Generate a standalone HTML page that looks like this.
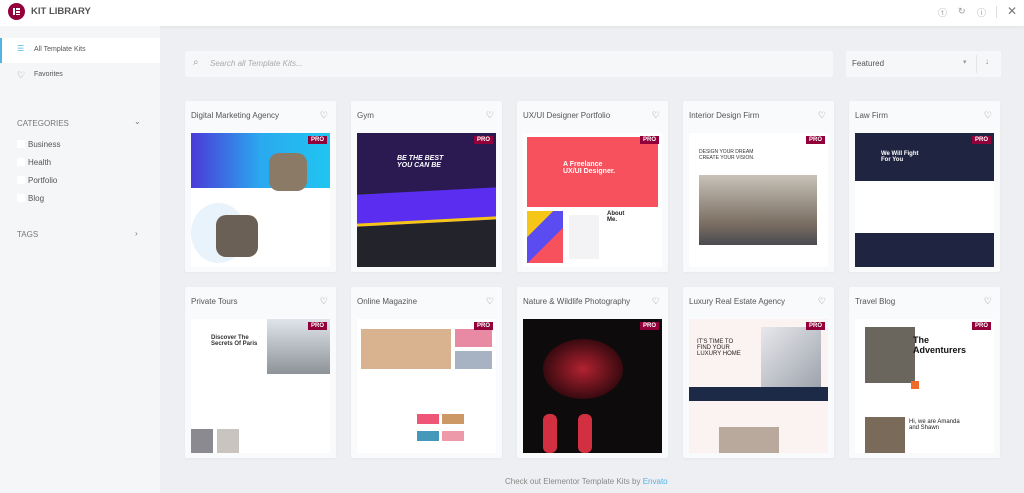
<!DOCTYPE html>
<html><head><meta charset="utf-8"><style>
*{margin:0;padding:0;box-sizing:border-box}
body{width:1024px;height:493px;overflow:hidden;font-family:"Liberation Sans",sans-serif;background:#eeeff2;position:relative;color:#555}
.hdr{position:absolute;left:0;top:0;width:1024px;height:26px;background:#fff;box-shadow:0 1px 4px rgba(0,0,0,.06)}
.logo{position:absolute;left:8px;top:3px;width:17px;height:17px;border-radius:50%;background:#92003b}
.logo i{position:absolute;background:#fff}
.hdr .t{position:absolute;left:31px;top:6px;font-size:9.5px;font-weight:bold;color:#555}
.side{position:absolute;left:0;top:26px;width:160px;height:467px;background:#f5f6f8}
.act{position:absolute;left:0;top:12px;width:160px;height:25px;background:#fff;border-left:2px solid #4fb4e4}
.s{position:absolute;font-size:8px;color:#555}
.cb{position:absolute;left:17px;width:8px;height:8px;background:#fff;border-radius:1px}
.search{position:absolute;left:185px;top:51px;width:648px;height:26px;background:#f6f7f9;border-radius:2px}
.search span{position:absolute;left:25px;top:8px;font-size:8px;font-style:italic;color:#aaa}
.feat{position:absolute;left:846px;top:51px;width:155px;height:26px;background:#f6f7f9}
.card{position:absolute;width:151px;height:171px;background:#f9fafb;border-radius:2px;box-shadow:0 1px 3px rgba(0,0,0,.04)}
.card .n{position:absolute;left:6px;top:10px;font-size:8px;color:#555}
.card .h{position:absolute;right:8px;top:9px;font-size:9px;color:#777}
.im{position:absolute;left:6px;top:32px;width:139px;height:134px;background:#fff;overflow:hidden}
.pro{position:absolute;right:3px;top:3px;background:#92003b;color:#fff;font-size:6px;font-weight:bold;padding:1px 3px}
.im div{position:absolute}
.foot{position:absolute;top:477px;left:505px;font-size:8px;color:#888}
</style></head><body>
<div class="hdr"><div class="logo"><i style="left:5px;top:5px;width:2px;height:7px"></i><i style="left:8px;top:5px;width:4px;height:1.5px"></i><i style="left:8px;top:8px;width:4px;height:1.5px"></i><i style="left:8px;top:10.5px;width:4px;height:1.5px"></i></div><div class="t">KIT LIBRARY</div>
<div class="s" style="left:938px;top:6px;color:#999;font-size:9px">ⓣ</div><div class="s" style="left:958px;top:6px;color:#999;font-size:9px">↻</div><div class="s" style="left:977px;top:6px;color:#999;font-size:9px">ⓘ</div><div style="position:absolute;left:996px;top:6px;width:1px;height:12px;background:#ddd"></div><div class="s" style="left:1007px;top:4px;font-size:12px;color:#777">✕</div></div>
<div class="side">
<div class="act"></div>
<div class="s" style="left:17px;top:18px;color:#4fb4e4">☰</div><div class="s" style="left:34px;top:20px;font-size:7px;color:#555">All Template Kits</div>
<div class="s" style="left:17px;top:44px;color:#888;font-size:9px">♡</div><div class="s" style="left:34px;top:45px;font-size:7px">Favorites</div>
<div class="s" style="left:17px;top:93px;color:#777">CATEGORIES</div><div class="s" style="left:134px;top:91px;color:#777">⌄</div>
<div class="cb" style="top:114px"></div><div class="s" style="left:28px;top:114px">Business</div>
<div class="cb" style="top:132px"></div><div class="s" style="left:28px;top:132px">Health</div>
<div class="cb" style="top:150px"></div><div class="s" style="left:28px;top:150px">Portfolio</div>
<div class="cb" style="top:168px"></div><div class="s" style="left:28px;top:168px">Blog</div>
<div class="s" style="left:17px;top:204px;color:#777">TAGS</div><div class="s" style="left:135px;top:203px;color:#777">›</div>
</div>
<div class="search"><div class="s" style="left:8px;top:6px;color:#999;font-size:10px">⌕</div><span>Search all Template Kits...</span></div>
<div class="feat"><div class="s" style="left:6px;top:8px">Featured</div><div class="s" style="left:117px;top:7px;color:#999;font-size:7px">▾</div><div style="position:absolute;left:130px;top:4px;width:1px;height:18px;background:#e5e5e5"></div><div class="s" style="left:139px;top:6px;color:#888">↓</div></div>

<div class="card" style="left:185px;top:101px"><div class="n">Digital Marketing Agency</div><div class="h">♡</div><div class="im"><div style="left:0;top:0;width:139px;height:55px;background:linear-gradient(90deg,#4a3ad8,#2aa9ef,#20c5f0)"></div><div style="left:78px;top:20px;width:38px;height:38px;border-radius:10px;background:#8a7a66"></div><div style="left:0;top:70px;width:55px;height:60px;border-radius:50%;background:#e8f3fb"></div><div style="left:25px;top:82px;width:42px;height:42px;border-radius:10px;background:#6a6055"></div><div class="pro">PRO</div></div></div>
<div class="card" style="left:351px;top:101px"><div class="n">Gym</div><div class="h">♡</div><div class="im"><div style="left:0;top:0;width:139px;height:134px;background:#23232b"></div><div style="left:0;top:0;width:139px;height:60px;background:#2b1a52"></div><div style="left:0;top:58px;width:139px;height:32px;background:#5a2df0;border-bottom:3px solid #f5c518;transform:skewY(-3deg)"></div><div style="left:40px;top:22px;color:#fff;font-size:7px;font-weight:bold;font-style:italic">BE THE BEST<br>YOU CAN BE</div><div class="pro">PRO</div></div></div>
<div class="card" style="left:517px;top:101px"><div class="n">UX/UI Designer Portfolio</div><div class="h">♡</div><div class="im"><div style="left:4px;top:4px;width:131px;height:70px;background:#f6515c"></div><div style="left:40px;top:28px;color:#fff;font-size:7px;font-weight:bold">A Freelance<br>UX/UI Designer.</div><div style="left:4px;top:78px;width:36px;height:52px;background:linear-gradient(135deg,#f5c518 30%,#5a4cf0 30% 60%,#f6515c 60%)"></div><div style="left:46px;top:82px;width:30px;height:44px;background:#f3f3f6"></div><div style="left:84px;top:78px;font-size:6px;font-weight:bold;color:#222">About<br>Me.</div><div class="pro">PRO</div></div></div>
<div class="card" style="left:683px;top:101px"><div class="n">Interior Design Firm</div><div class="h">♡</div><div class="im"><div style="left:10px;top:16px;font-size:5px;color:#333">DESIGN YOUR DREAM<br>CREATE YOUR VISION.</div><div style="left:10px;top:42px;width:118px;height:70px;background:linear-gradient(180deg,#c8c2b8,#7a6e62 70%,#4a4a50)"></div><div class="pro">PRO</div></div></div>
<div class="card" style="left:849px;top:101px"><div class="n">Law Firm</div><div class="h">♡</div><div class="im"><div style="left:0;top:0;width:139px;height:48px;background:#1f2540"></div><div style="left:26px;top:18px;color:#fff;font-size:6px;font-weight:bold">We Will Fight<br>For You</div><div style="left:0;top:100px;width:139px;height:34px;background:#1f2540"></div><div class="pro">PRO</div></div></div>

<div class="card" style="left:185px;top:287px"><div class="n">Private Tours</div><div class="h">♡</div><div class="im"><div style="left:20px;top:16px;font-size:6px;font-weight:bold;color:#333">Discover The<br>Secrets Of Paris</div><div style="left:76px;top:0;width:63px;height:55px;background:linear-gradient(180deg,#dfe5ea,#8e9398)"></div><div style="left:0;top:110px;width:22px;height:24px;background:#8a8a90"></div><div style="left:26px;top:110px;width:22px;height:24px;background:#c9c4c0"></div><div class="pro">PRO</div></div></div>
<div class="card" style="left:351px;top:287px"><div class="n">Online Magazine</div><div class="h">♡</div><div class="im"><div style="left:4px;top:10px;width:90px;height:40px;background:#d9b28f"></div><div style="left:98px;top:10px;width:37px;height:18px;background:#e88aa4"></div><div style="left:98px;top:32px;width:37px;height:18px;background:#a7b3c2"></div><div style="left:60px;top:95px;width:22px;height:10px;background:#e57"></div><div style="left:85px;top:95px;width:22px;height:10px;background:#c96"></div><div style="left:60px;top:112px;width:22px;height:10px;background:#49b"></div><div style="left:85px;top:112px;width:22px;height:10px;background:#e9a"></div><div class="pro">PRO</div></div></div>
<div class="card" style="left:517px;top:287px"><div class="n">Nature &amp; Wildlife Photography</div><div class="h">♡</div><div class="im" style="background:#0d0b0c"><div style="left:20px;top:20px;width:80px;height:60px;border-radius:50%;background:radial-gradient(#b22230,#3a0a10 70%)"></div><div style="left:20px;top:95px;width:14px;height:39px;background:#d23040;border-radius:6px"></div><div style="left:55px;top:95px;width:14px;height:39px;background:#d23040;border-radius:6px"></div><div class="pro">PRO</div></div></div>
<div class="card" style="left:683px;top:287px"><div class="n">Luxury Real Estate Agency</div><div class="h">♡</div><div class="im" style="background:#fbf3f1"><div style="left:8px;top:20px;font-size:6px;color:#222">IT'S TIME TO<br>FIND YOUR<br>LUXURY HOME</div><div style="left:72px;top:8px;width:60px;height:65px;background:linear-gradient(135deg,#e8e8ec,#9aa0aa)"></div><div style="left:0;top:68px;width:139px;height:14px;background:#1c2a48"></div><div style="left:30px;top:108px;width:60px;height:26px;background:#b9a89c"></div><div class="pro">PRO</div></div></div>
<div class="card" style="left:849px;top:287px"><div class="n">Travel Blog</div><div class="h">♡</div><div class="im"><div style="left:10px;top:8px;width:50px;height:56px;background:#6a665e"></div><div style="left:58px;top:16px;font-size:9px;font-weight:bold;color:#111">The<br>Adventurers</div><div style="left:56px;top:62px;width:8px;height:8px;background:#f06a2a"></div><div style="left:10px;top:98px;width:40px;height:36px;background:#7a6a5a"></div><div style="left:54px;top:100px;font-size:6px;color:#222">Hi, we are Amanda<br>and Shawn</div><div class="pro">PRO</div></div></div>

<div class="foot">Check out Elementor Template Kits by <span style="color:#4fb4e4">Envato</span></div>
</body></html>
